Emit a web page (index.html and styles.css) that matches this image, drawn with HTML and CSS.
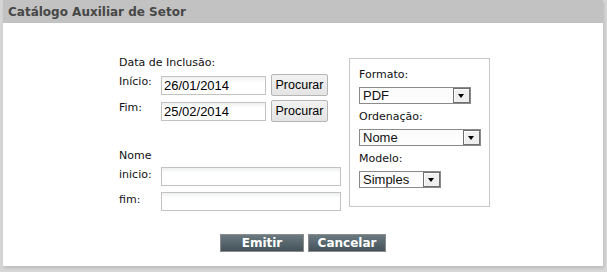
FILE: index.html
```html
<!DOCTYPE html>
<html lang="pt">
<head>
  <meta charset="UTF-8" />
  <title>Catálogo Auxiliar de Setor</title>
  <link rel="stylesheet" href="styles.css">
</head>
<body>

  <div class="panel">
    <div class="panel-title">Catálogo Auxiliar de Setor</div>

    <div class="panel-body">
      <div class="filtros">
        <div class="col-esq">
          <div class="grupo-label">Data de Inclusão:</div>
          <div class="linha">
            <label class="rotulo">Início:</label>
            <input class="campo campo-data" type="text" value="26/01/2014">
            <button class="btn-procurar">Procurar</button>
          </div>
          <div class="linha">
            <label class="rotulo">Fim:</label>
            <input class="campo campo-data" type="text" value="25/02/2014">
            <button class="btn-procurar">Procurar</button>
          </div>

          <div class="grupo-label nome-label">Nome</div>
          <div class="linha linha-nome">
            <label class="rotulo">inicio:</label>
            <input class="campo campo-nome" type="text">
          </div>
          <div class="linha linha-nome">
            <label class="rotulo">fim:</label>
            <input class="campo campo-nome" type="text">
          </div>
        </div>

        <div class="opcoes">
          <div class="opcao-label">Formato:</div>
          <div class="combo combo-formato">
            <span class="combo-valor">PDF</span>
            <span class="combo-seta"></span>
          </div>
          <div class="opcao-label">Ordenação:</div>
          <div class="combo combo-ordem">
            <span class="combo-valor">Nome</span>
            <span class="combo-seta"></span>
          </div>
          <div class="opcao-label">Modelo:</div>
          <div class="combo combo-modelo">
            <span class="combo-valor">Simples</span>
            <span class="combo-seta"></span>
          </div>
        </div>
      </div>

      <div class="acoes">
        <button class="btn-acao btn-emitir">Emitir</button>
        <button class="btn-acao btn-cancelar">Cancelar</button>
      </div>
    </div>
  </div>

</body>
</html>
```

FILE: styles.css
```css
html, body {
  margin: 0;
  padding: 0;
}

body {
  background: #d6d6d6;
  font-family: 'DejaVu Sans', Verdana, sans-serif;
  font-size: 11px;
  color: #111;
  width: 607px;
  height: 272px;
}

.panel {
  margin: 0 4px 0 3px;
  background: #fff;
  height: 266px;
  box-shadow: 1px 2px 3px rgba(0, 0, 0, 0.12);
}

.panel-title {
  background: #c2c2c2;
  color: #474747;
  font-weight: bold;
  font-size: 12px;
  height: 23px;
  line-height: 24px;
  padding-left: 5px;
}

.panel-body {
  padding-top: 34px;
}

.filtros {
  display: flex;
  align-items: flex-start;
  padding-left: 116px;
}

.col-esq {
  width: 230px;
}

.grupo-label {
  height: 16px;
  line-height: 14px;
  margin-top: -1px;
  margin-bottom: 2px;
}

.linha {
  display: flex;
  align-items: center;
  height: 22px;
  margin-bottom: 4px;
}

.rotulo {
  width: 42px;
  align-self: flex-start;
  line-height: 14px;
  margin-top: 1px;
}

.campo {
  box-sizing: border-box;
  height: 19px;
  border: 1px solid #c2c2c2;
  background: linear-gradient(#eef0f0, #fff 5px);
  font-family: 'Liberation Sans', Arial, sans-serif;
  font-size: 13px;
  padding: 0 2px;
  margin: 0;
  color: #000;
}

.campo-data {
  width: 105px;
}

.campo-nome {
  width: 180px;
}

.btn-procurar {
  box-sizing: border-box;
  margin-left: 5px;
  width: 57px;
  height: 22px;
  padding: 0;
  border: 1px solid #b5b5b5;
  border-radius: 2px;
  background: linear-gradient(#f2f2f2, #e4e4e4);
  font-family: 'Liberation Sans', Arial, sans-serif;
  font-size: 12.5px;
  color: #000;
}

.nome-label {
  margin-top: 27px;
  margin-bottom: 2px;
}

.linha-nome {
  height: 19px;
  margin-bottom: 6px;
}

.linha-nome .rotulo {
  margin-top: 1px;
}

.opcoes {
  box-sizing: border-box;
  margin-top: 1px;
  width: 141px;
  height: 149px;
  border: 1px solid #c8c8c8;
  padding: 9px 0 0 9px;
}

.opcao-label {
  line-height: 14px;
  margin-bottom: 5px;
}

.combo {
  box-sizing: border-box;
  display: flex;
  align-items: center;
  height: 17px;
  border: 1px solid #8a8a8a;
  background: linear-gradient(#fafafa, #fff);
  font-family: 'Liberation Sans', Arial, sans-serif;
  font-size: 13px;
  margin-bottom: 6px;
}

.combo-valor {
  flex: 1;
  padding-left: 3px;
  line-height: 15px;
}

.combo-seta {
  box-sizing: border-box;
  width: 17px;
  height: 15px;
  border: 1px solid #6f6f6f;
  background: #efefef;
  box-shadow: inset 1px 1px 0 #fff;
  position: relative;
}

.combo-seta::after {
  content: "";
  position: absolute;
  left: 4px;
  top: 5px;
  border-left: 3.5px solid transparent;
  border-right: 3.5px solid transparent;
  border-top: 4px solid #000;
}

.combo-formato {
  width: 112px;
}

.combo-ordem {
  width: 122px;
}

.combo-modelo {
  width: 82px;
}

.acoes {
  display: flex;
  justify-content: center;
  gap: 4px;
  margin-top: 17px;
}

.btn-acao {
  box-sizing: border-box;
  height: 18px;
  padding: 0;
  border: 1px solid #8c8c8c;
  background: linear-gradient(#6a7a80, #435359);
  color: #fff;
  font-family: 'DejaVu Sans', Verdana, sans-serif;
  font-weight: bold;
  font-size: 12px;
  line-height: 15px;
}

.btn-emitir {
  width: 84px;
}

.btn-cancelar {
  width: 78px;
}
```
